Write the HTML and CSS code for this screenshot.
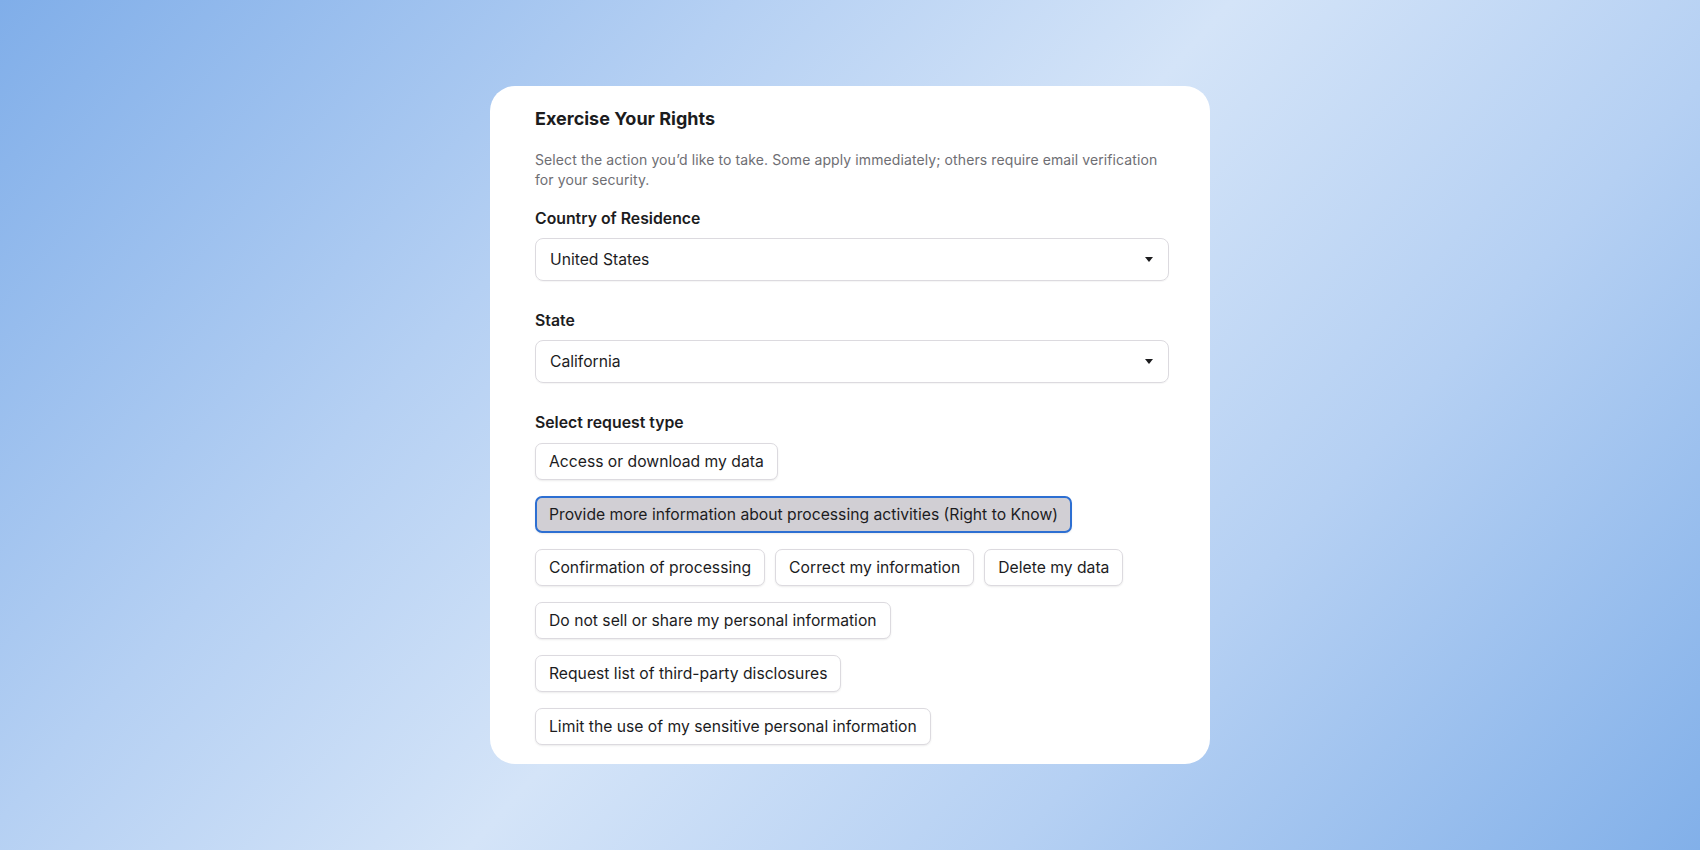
FILE: index.html
```html
<!DOCTYPE html>
<html lang="en">
<head>
  <meta charset="UTF-8">
  <meta name="viewport" content="width=device-width, initial-scale=1.0">
  <title>Exercise Your Rights</title>
  <link rel="stylesheet" href="styles.css">
</head>
<body>
  <div class="page">
    <!-- Card principal -->
    <div class="card">
      <h2 class="card-title">Exercise Your Rights</h2>
      <p class="card-desc">Select the action you’d like to take. Some apply immediately; others require email verification for your security.</p>

      <div class="field">
        <label class="field-label">Country of Residence</label>
        <div class="select">
          <span>United States</span>
          <span class="caret"></span>
        </div>
      </div>

      <div class="field">
        <label class="field-label">State</label>
        <div class="select">
          <span>California</span>
          <span class="caret"></span>
        </div>
      </div>

      <div class="field">
        <label class="field-label">Select request type</label>
        <div class="options">
          <button class="option">Access or download my data</button>
          <button class="option active">Provide more information about processing activities (Right to Know)</button>
          <button class="option">Confirmation of processing</button>
          <button class="option">Correct my information</button>
          <button class="option">Delete my data</button>
          <button class="option">Do not sell or share my personal information</button>
          <button class="option">Request list of third-party disclosures</button>
          <button class="option">Limit the use of my sensitive personal information</button>
        </div>
      </div>
    </div>
  </div>
</body>
</html>
```

FILE: styles.css
```css
html, body {
  margin: 0;
  height: 100%;
}
body {
  font-family: Inter, "Noto Sans", Arial, sans-serif;
  background: linear-gradient(132deg, #80aee9 0%, #b5d0f3 30%, #d4e4f8 50%, #b5d0f3 72%, #82b0e9 100%);
  color: #1c1c1e;
}
.page {
  display: flex;
  justify-content: center;
  padding-top: 86px;
}
.card {
  width: 720px;
  box-sizing: border-box;
  height: 678px;
  background-color: white;
  border-radius: 25px;
  padding: 21px 41px 18px 45px;
  overflow: hidden;
}
.card-title {
  font-size: 18px;
  font-weight: 700;
  margin: 0 0 19px;
  line-height: 24px;
}
.card-desc {
  font-size: 14px;
  letter-spacing: 0.1px;
  line-height: 20px;
  color: #6e6e73;
  margin: 0 0 19px;
}
.field {
  margin-bottom: 30px;
}
.field-label {
  display: block;
  font-size: 15.8px;
  font-weight: 600;
  line-height: 20px;
  margin-bottom: 9px;
}
.select {
  display: flex;
  justify-content: space-between;
  align-items: center;
  height: 43px;
  box-sizing: border-box;
  padding: 0 15px 0 14px;
  border: 1px solid #dcdadf;
  border-radius: 8px;
  font-size: 15.7px;
  box-shadow: 0 1px 1px rgba(0, 0, 0, 0.04);
}
.caret {
  width: 0;
  height: 0;
  border-left: 4.5px solid transparent;
  border-right: 4.5px solid transparent;
  border-top: 5px solid #1c1c1e;
}
.options {
  display: flex;
  flex-wrap: wrap;
  gap: 16px 10px;
  padding-top: 1px;
}
.option {
  font-family: inherit;
  font-size: 15.7px;
  color: #1c1c1e;
  background-color: white;
  height: 37px;
  padding: 0 13px;
  border: 1px solid #dcdadf;
  border-radius: 7px;
  box-shadow: 0 1px 2px rgba(0, 0, 0, 0.08);
  cursor: pointer;
}
.option.active {
  background-color: #d1cfd4;
  border: 2px solid #2d6fd2;
  padding: 0 12px;
}
```
